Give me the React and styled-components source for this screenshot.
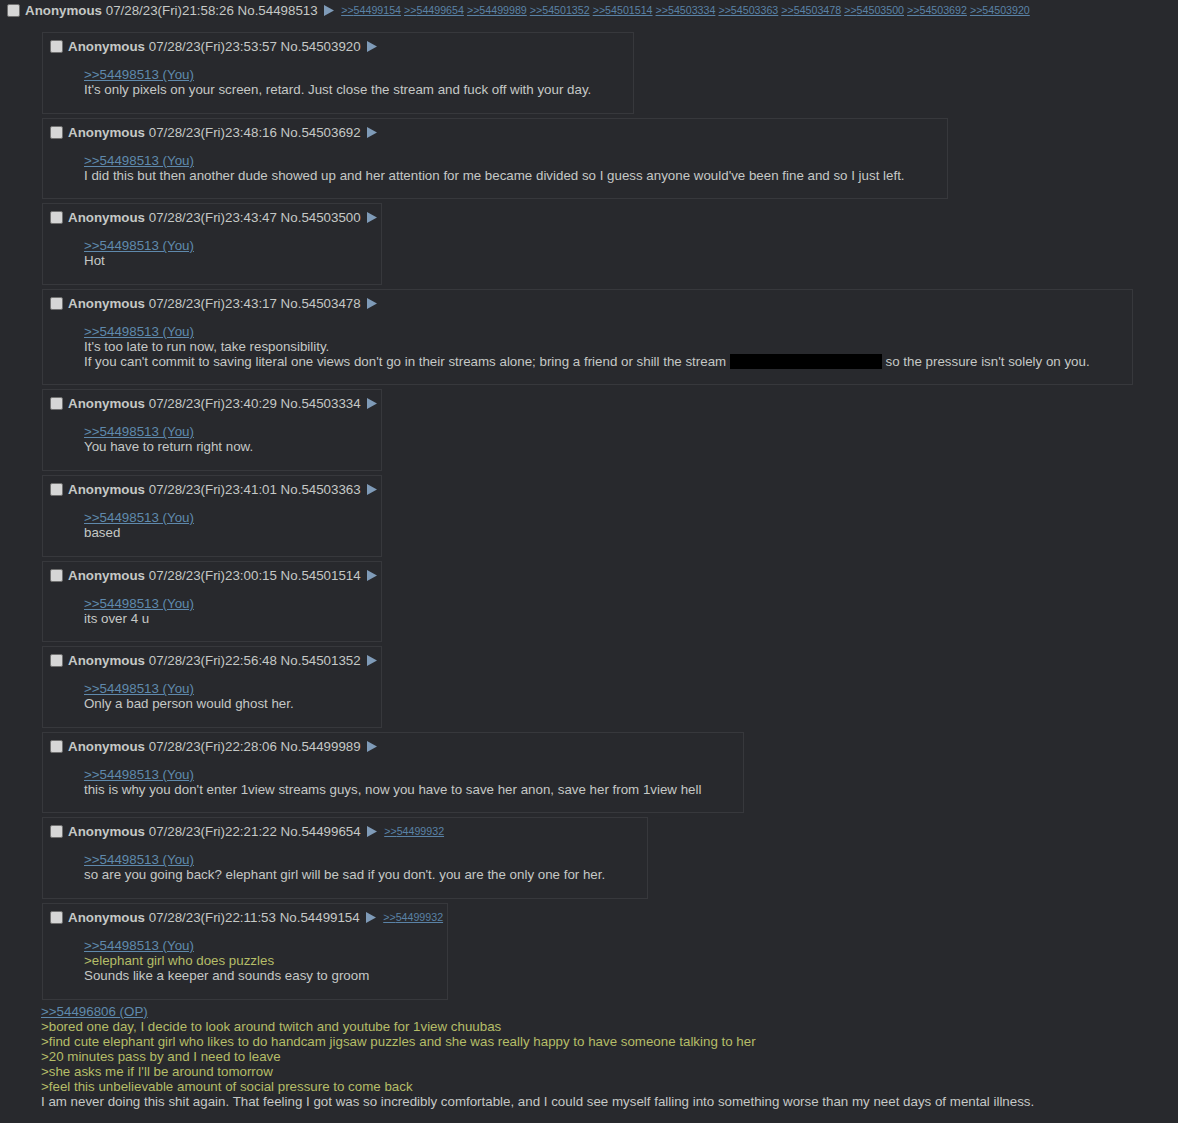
import React from "react";
import styled, { createGlobalStyle } from "styled-components";

const Global = createGlobalStyle`
  html, body { margin: 0; padding: 0; background: #28292d; }
  body {
    font-family: "Liberation Sans", Arial, sans-serif;
    font-size: 13.33px;
    line-height: 15px;
    color: #c5c8c6;
  }
`;

const Page = styled.div`
  min-height: 1123px;
  background: #28292d;
`;

const PostInfo = styled.div`
  display: flex;
  align-items: center;
  height: ${(p) => (p.$op ? "20px" : "21px")};
  padding-left: ${(p) => (p.$op ? "7px" : "5px")};
  padding-right: 2px;
  white-space: pre;
`;

const Check = styled.span`
  display: inline-block;
  box-sizing: border-box;
  width: 13px;
  height: 13px;
  margin-right: 5px;
  background: #d6d6d6;
  border: 1px solid #707070;
  border-radius: 2px;
  flex: none;
`;

const Name = styled.span`
  font-weight: bold;
  color: #c5c8c6;
`;

const Arrow = styled.svg`
  margin-left: 6.5px;
  flex: none;
`;

const SmallLink = styled.a`
  font-size: 10.67px;
  color: #5a82a6;
  text-decoration: underline;
  margin-left: ${(p) => (p.$first ? "7px" : "3px")};
`;

const Replies = styled.div`
  display: flex;
  flex-direction: column;
  align-items: flex-start;
  gap: 4px;
  margin: 12px 0 0 42px;
`;

const Reply = styled.div`
  box-sizing: border-box;
  border: 1px solid #37383c;
  background: #28292d;
  padding: 3px 2px 2px;
`;

const Quote = styled.div`
  margin: 10px 40px 13.6px 39px;
  white-space: nowrap;
`;

const QLink = styled.a`
  color: #5f89ac;
  text-decoration: underline;
  display: inline-block;
`;

const Line = styled.div`
  color: ${(p) => (p.$green ? "#b5bd68" : "#c5c8c6")};
`;

const Spoiler = styled.span`
  display: inline-block;
  width: 152px;
  height: 15px;
  background: #000;
  vertical-align: top;
`;

const Body = styled.div`
  margin: 4px 0 0 41px;
`;

const TriIcon = () => (
  <Arrow width="10" height="11" viewBox="0 0 10 11">
    <polygon points="0,0 10,5.5 0,11" fill="#7f9bb8" />
  </Arrow>
);

const backlinks = [
  "54499154", "54499654", "54499989", "54501352", "54501514", "54503334",
  "54503363", "54503478", "54503500", "54503692", "54503920",
];

const posts = [
  { t: "23:53:57", no: "54503920", lines: [["It's only pixels on your screen, retard. Just close the stream and fuck off with your day."]] },
  { t: "23:48:16", no: "54503692", lines: [["I did this but then another dude showed up and her attention for me became divided so I guess anyone would've been fine and so I just left."]] },
  { t: "23:43:47", no: "54503500", lines: [["Hot"]] },
  { t: "23:43:17", no: "54503478", spoiler: true, lines: [["It's too late to run now, take responsibility."]] },
  { t: "23:40:29", no: "54503334", lines: [["You have to return right now."]] },
  { t: "23:41:01", no: "54503363", lines: [["based"]] },
  { t: "23:00:15", no: "54501514", lines: [["its over 4 u"]] },
  { t: "22:56:48", no: "54501352", lines: [["Only a bad person would ghost her."]] },
  { t: "22:28:06", no: "54499989", lines: [["this is why you don't enter 1view streams guys, now you have to save her anon, save her from 1view hell"]] },
  { t: "22:21:22", no: "54499654", bl: "54499932", lines: [["so are you going back? elephant girl will be sad if you don't. you are the only one for her."]] },
  { t: "22:11:53", no: "54499154", bl: "54499932", lines: [[">elephant girl who does puzzles", true], ["Sounds like a keeper and sounds easy to groom"]] },
];

export default function App() {
  return (
    <Page>
      <Global />
      <PostInfo $op>
        <Check />
        <Name>Anonymous</Name> 07/28/23(Fri)21:58:26 No.54498513
        <TriIcon />
        {backlinks.map((b, i) => (
          <SmallLink key={b} $first={i === 0} href="#">&gt;&gt;{b}</SmallLink>
        ))}
      </PostInfo>
      <Replies>
        {posts.map((p) => (
          <Reply key={p.no}>
            <PostInfo>
              <Check />
              <Name>Anonymous</Name> 07/28/23(Fri){p.t} No.{p.no}
              <TriIcon />
              {p.bl && <SmallLink $first href="#">&gt;&gt;{p.bl}</SmallLink>}
            </PostInfo>
            <Quote>
              <QLink href="#">&gt;&gt;54498513 (You)</QLink>
              {p.lines.map(([txt, g], i) => (
                <Line key={i} $green={g}>{txt}</Line>
              ))}
              {p.spoiler && (
                <Line>
                  If you can't commit to saving literal one views don't go in their streams alone; bring a friend or shill the stream <Spoiler /> so the pressure isn't solely on you.
                </Line>
              )}
            </Quote>
          </Reply>
        ))}
      </Replies>
      <Body>
        <QLink href="#">&gt;&gt;54496806 (OP)</QLink>
        <Line $green>&gt;bored one day, I decide to look around twitch and youtube for 1view chuubas</Line>
        <Line $green>&gt;find cute elephant girl who likes to do handcam jigsaw puzzles and she was really happy to have someone talking to her</Line>
        <Line $green>&gt;20 minutes pass by and I need to leave</Line>
        <Line $green>&gt;she asks me if I'll be around tomorrow</Line>
        <Line $green>&gt;feel this unbelievable amount of social pressure to come back</Line>
        <Line>I am never doing this shit again. That feeling I got was so incredibly comfortable, and I could see myself falling into something worse than my neet days of mental illness.</Line>
      </Body>
    </Page>
  );
}
